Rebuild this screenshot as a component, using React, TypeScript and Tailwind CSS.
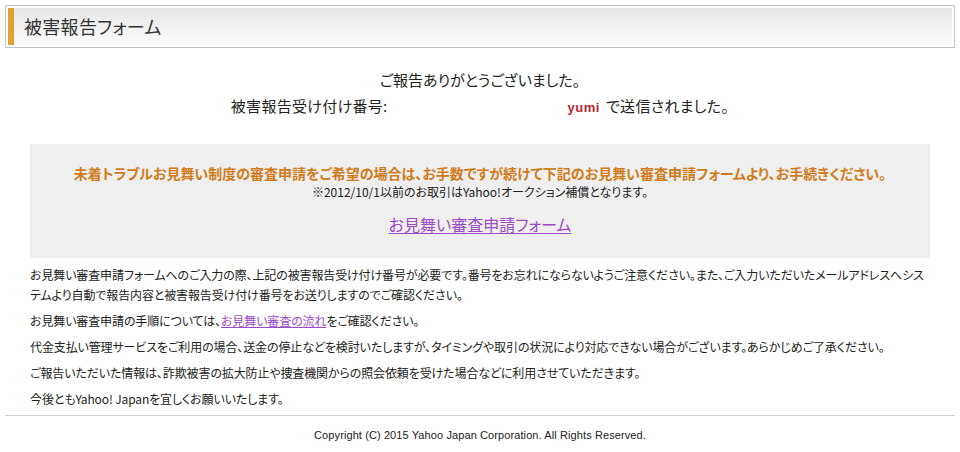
import React from 'react';

const jp = "font-['Noto_Sans_CJK_JP','Noto_Sans',sans-serif] [font-feature-settings:'palt']";

const NOTES = [
    'お見舞い審査申請フォームへのご入力の際、上記の被害報告受け付け番号が必要です。番号をお忘れにならないようご注意ください。また、ご入力いただいたメールアドレスへシステムより自動で報告内容と被害報告受け付け番号をお送りしますのでご確認ください。',
    null,
    '代金支払い管理サービスをご利用の場合、送金の停止などを検討いたしますが、タイミングや取引の状況により対応できない場合がございます。あらかじめご了承ください。',
    'ご報告いただいた情報は、詐欺被害の拡大防止や捜査機関からの照会依頼を受けた場合などに利用させていただきます。',
    '今後ともYahoo! Japanを宜しくお願いいたします。'
];

export default function App() {
    return (
        <div className={`w-[960px] h-[452px] bg-white text-[#333] overflow-hidden pt-[5px] ${jp}`}>
            {/* Title bar */}
            <div className="mx-[5px] h-[43px] border border-[#c3c3c3] p-[2px]">
                <div className="flex h-full items-stretch bg-gradient-to-b from-[#e6e6e6] to-[#fbfbfb]">
                    <div className="w-[6px] bg-[#e4a033]" />
                    <h1 className="ml-[10px] flex items-center text-[18px] tracking-[0.3px] text-[#333]">被害報告フォーム</h1>
                </div>
            </div>

            {/* Thanks */}
            <div className="mt-[19px] text-center text-[15px] leading-[26px] text-[#222]">
                <p>ご報告ありがとうございました。</p>
                <p className="tracking-[0.3px]">
                    被害報告受け付け番号:
                    <span className="inline-block w-[180px]" />
                    <span className="font-bold font-['Liberation_Sans',sans-serif] text-[13px] tracking-[0.5px] text-[#b8262c]">yumi</span>
                    <span className="ml-[6px]">で送信されました。</span>
                </p>
            </div>

            {/* Notice box */}
            <div className="mx-[30px] mt-[23px] h-[114px] bg-[#efefef] pt-[19px] text-center">
                <p className="text-[14px] leading-[20px] font-bold text-[#d07c1b]">
                    未着トラブルお見舞い制度の審査申請をご希望の場合は、お手数ですが続けて下記のお見舞い審査申請フォームより、お手続きください。
                </p>
                <p className="text-[12px] leading-[17px] text-[#222]">
                    ※2012/10/1以前のお取引はYahoo!オークション補償となります。
                </p>
                <p className="mt-[14px] text-[16px] leading-[20px]">
                    <a href="#" className="text-[#9b4cc4] underline underline-offset-2">お見舞い審査申請フォーム</a>
                </p>
            </div>

            {/* Notes */}
            <div className="mx-[30px] mt-[7px] text-[12px] leading-[20px] tracking-[-0.12px] text-[#222]">
                {NOTES.map((t, i) => (
                    <p key={i} className="mb-[6px]">
                        {t ?? (
                            <>
                                お見舞い審査申請の手順については、
                                <a href="#" className="text-[#9b4cc4] underline">お見舞い審査の流れ</a>
                                をご確認ください。
                            </>
                        )}
                    </p>
                ))}
            </div>

            {/* Footer */}
            <div className="mx-[5px] mt-[3px] border-t border-[#cfcfcf]" />
            <p className="mt-[11px] text-center text-[11px] leading-[16px] tracking-[0.1px] text-[#222] font-['Liberation_Sans',sans-serif]">
                Copyright (C) 2015 Yahoo Japan Corporation. All Rights Reserved.
            </p>
        </div>
    );
}
